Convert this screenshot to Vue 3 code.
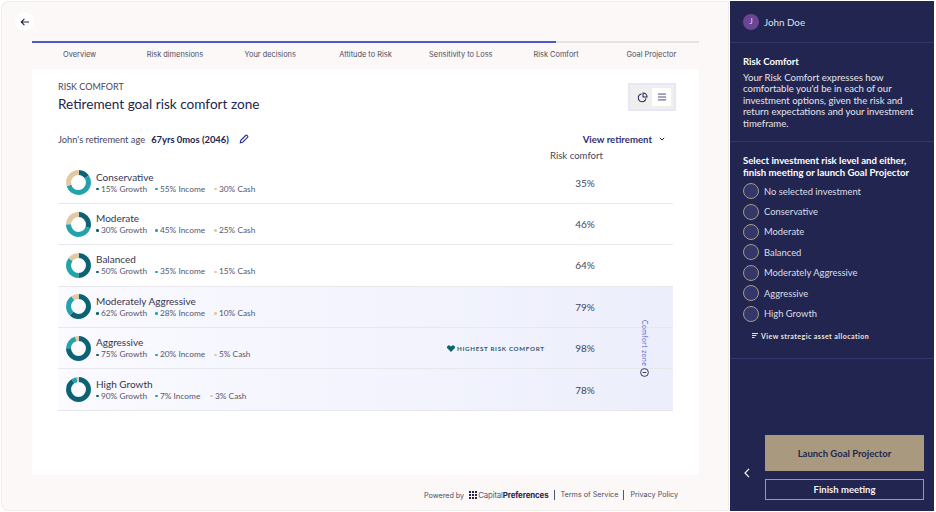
<script setup>
const steps = ['Overview', 'Risk dimensions', 'Your decisions', 'Attitude to Risk', 'Sensitivity to Loss', 'Risk Comfort', 'Goal Projector']

const plans = [
  { name: 'Conservative', growth: 15, income: 55, cash: 30, comfort: 35 },
  { name: 'Moderate', growth: 30, income: 45, cash: 25, comfort: 46 },
  { name: 'Balanced', growth: 50, income: 35, cash: 15, comfort: 64 },
  { name: 'Moderately Aggressive', growth: 62, income: 28, cash: 10, comfort: 79 },
  { name: 'Aggressive', growth: 75, income: 20, cash: 5, comfort: 98, best: true },
  { name: 'High Growth', growth: 90, income: 7, cash: 3, comfort: 78 },
]
const plainPlans = plans.slice(0, 3)
const zonePlans = plans.slice(3)

const options = ['No selected investment', ...plans.map((p) => p.name)]

function slices(p) {
  return [
    { color: '#0b6273', value: p.growth, offset: 25 },
    { color: '#22a3ac', value: p.income, offset: 25 - p.growth },
    { color: '#e3c9a2', value: p.cash, offset: 25 - p.growth - p.income },
  ]
}
</script>

<template>
  <div class="page">
    <main class="left">
      <button class="back">
        <svg width="10" height="10" viewBox="0 0 10 10" fill="none" stroke="#22254f" stroke-width="1.1">
          <path d="M9 5H1.2M4.4 1.8 1.2 5l3.2 3.2" />
        </svg>
      </button>

      <div class="progress"><div class="progress-fill"></div></div>
      <nav class="steps">
        <span v-for="s in steps" :key="s">{{ s }}</span>
      </nav>

      <section class="card">
        <div class="card-head">
          <div>
            <div class="eyebrow">RISK COMFORT</div>
            <h1>Retirement goal risk comfort zone</h1>
          </div>
          <div class="toggle">
            <span class="toggle-btn">
              <svg width="11" height="11" viewBox="0 0 12 12" fill="none" stroke="#22254f" stroke-width="1.1">
                <path d="M5 2.2a4.2 4.2 0 1 0 4.8 4.8" />
                <path d="M6.6 1v4.4H11A4.4 4.4 0 0 0 6.6 1Z" />
              </svg>
            </span>
            <span class="toggle-btn on">
              <svg width="10" height="8" viewBox="0 0 10 8" fill="#7f80a6">
                <rect x="1" y="0.4" width="8" height="1.4" />
                <rect x="1" y="3.3" width="8" height="1.4" />
                <rect x="1" y="6.2" width="8" height="1.4" />
              </svg>
            </span>
          </div>
        </div>

        <div class="age-row">
          <span class="age-label">John's retirement age</span>
          <b class="age-value">67yrs 0mos (2046)</b>
          <svg class="pencil" width="10" height="10" viewBox="0 0 10 10" fill="none" stroke="#2b2f8f" stroke-width="1.1">
            <path d="M1.3 8.7 1.8 6.3 6.6 1.5a1 1 0 0 1 1.5 0l.4.4a1 1 0 0 1 0 1.5L3.7 8.2Z" />
          </svg>
          <span class="view-link">View retirement</span>
          <svg class="chev" width="6" height="4" viewBox="0 0 6 4" fill="none" stroke="#22254f" stroke-width="1">
            <path d="M.8.8 3 3 5.2.8" />
          </svg>
        </div>
        <div class="col-head">Risk comfort</div>

        <div v-for="p in plainPlans" :key="p.name" class="row">
          <svg class="donut" width="25" height="25" viewBox="0 0 40 40">
            <circle
              v-for="s in slices(p)"
              :key="s.color"
              cx="20"
              cy="20"
              r="15.915"
              fill="none"
              stroke-width="8"
              :stroke="s.color"
              :stroke-dasharray="`${s.value} ${100 - s.value}`"
              :stroke-dashoffset="s.offset"
            />
          </svg>
          <div class="plan">
            <div class="plan-name">{{ p.name }}</div>
            <div class="mix">
              <span class="mix-item"><i class="dot growth"></i>{{ p.growth }}% Growth</span>
              <span class="mix-item"><i class="dot income"></i>{{ p.income }}% Income</span>
              <span class="mix-item"><i class="dot cash"></i>{{ p.cash }}% Cash</span>
            </div>
          </div>
          <div class="badge"></div>
          <div class="pct">{{ p.comfort }}%</div>
        </div>

        <div class="zone">
          <div v-for="p in zonePlans" :key="p.name" class="row">
            <svg class="donut" width="25" height="25" viewBox="0 0 40 40">
              <circle
                v-for="s in slices(p)"
                :key="s.color"
                cx="20"
                cy="20"
                r="15.915"
                fill="none"
                stroke-width="8"
                :stroke="s.color"
                :stroke-dasharray="`${s.value} ${100 - s.value}`"
                :stroke-dashoffset="s.offset"
              />
            </svg>
            <div class="plan">
              <div class="plan-name">{{ p.name }}</div>
              <div class="mix">
                <span class="mix-item"><i class="dot growth"></i>{{ p.growth }}% Growth</span>
                <span class="mix-item" :class="{ tight: p.income < 10 }"><i class="dot income"></i>{{ p.income }}% Income</span>
                <span class="mix-item"><i class="dot cash"></i>{{ p.cash }}% Cash</span>
              </div>
            </div>
            <div class="badge">
              <template v-if="p.best">
                <svg width="8" height="7" viewBox="0 0 8 7" fill="#0b6273">
                  <path d="M4 7 .6 3.6A1.9 1.9 0 0 1 .6.9a1.9 1.9 0 0 1 2.7 0l.7.6.7-.6a1.9 1.9 0 0 1 2.7 0 1.9 1.9 0 0 1 0 2.7Z" />
                </svg>
                HIGHEST RISK COMFORT
              </template>
            </div>
            <div class="pct">{{ p.comfort }}%</div>
          </div>
          <div class="zone-tag">
            <span class="zone-text">Comfort zone</span>
            <svg width="9" height="9" viewBox="0 0 9 9" fill="none" stroke="#22254f" stroke-width="0.9">
              <circle cx="4.5" cy="4.5" r="3.9" />
              <path d="M2.6 4.5h3.8" />
            </svg>
          </div>
        </div>
      </section>

      <footer class="foot">
        <span class="powered">Powered by</span>
        <svg class="logo" width="8" height="8" viewBox="0 0 8 8" fill="#22254f">
          <template v-for="x in [0, 3, 6]" :key="x">
            <rect v-for="y in [0, 3, 6]" :key="y" :x="x" :y="y" width="2" height="2" />
          </template>
        </svg>
        <span class="brand"><span class="brand-thin">Capital</span><b>Preferences</b></span>
        <span class="foot-link">Terms of Service</span>
        <span class="foot-link">Privacy Policy</span>
      </footer>
    </main>

    <aside class="side">
      <div class="user">
        <span class="avatar">J</span>
        <span>John Doe</span>
      </div>
      <div class="about">
        <h2>Risk Comfort</h2>
        <p>Your Risk Comfort expresses how comfortable you'd be in each of our investment options, given the risk and return expectations and your investment timeframe.</p>
      </div>
      <div class="select">
        <h2>Select investment risk level and either, finish meeting or launch Goal Projector</h2>
        <label v-for="o in options" :key="o" class="radio">
          <i class="radio-mark"></i>
          <span>{{ o }}</span>
        </label>
        <div class="strategic">
          <svg width="6" height="5" viewBox="0 0 6 5" fill="#e9e6df">
            <rect width="6" height="1" />
            <rect y="2" width="4.4" height="1" />
            <rect y="4" width="2.6" height="1" />
          </svg>
          View strategic asset allocation
        </div>
      </div>
      <div class="actions">
        <svg class="collapse" width="6" height="10" viewBox="0 0 6 10" fill="none" stroke="#fff" stroke-width="1.2">
          <path d="M5 .8 1 5l4 4.2" />
        </svg>
        <div class="buttons">
          <button class="launch">Launch Goal Projector</button>
          <button class="finish">Finish meeting</button>
        </div>
      </div>
    </aside>
  </div>
</template>

<style>
html, body { background: #fff; }
</style>

<style scoped>
.page {
  width: 936px;
  height: 512px;
  display: flex;
  overflow: hidden;
  padding: 1px 2px 1px 1px;
  box-sizing: border-box;
  background: #fff;
  font-family: Lato, "Noto Sans", sans-serif;
  color: #22254f;
}
.left {
  position: relative;
  width: 728px;
  background: #fbf8f7;
  border-radius: 8px 0 0 8px;
  box-shadow: inset 0 0 0 1px #f0eeed;
  padding: 40px 30px 0 31px;
  box-sizing: border-box;
  display: flex;
  flex-direction: column;
}
.back {
  position: absolute;
  left: 14px;
  top: 11px;
  width: 19px;
  height: 19px;
  border-radius: 50%;
  border: 0;
  padding: 0;
  background: #fff;
  display: flex;
  align-items: center;
  justify-content: center;
}
.progress {
  height: 2px;
  flex: none;
  background: #e4e2e2;
}
.progress-fill {
  width: 524px;
  height: 100%;
  background: #4a58d6;
}
.steps {
  display: grid;
  grid-template-columns: repeat(7, 1fr);
  height: 26px;
  flex: none;
  padding-bottom: 4px;
  box-sizing: border-box;
  align-items: center;
  text-align: center;
  font-family: Inter, sans-serif;
  font-size: 7.4px;
  color: #4b4d63;
}
.card {
  background: #fff;
  height: 406px;
  flex: none;
  padding: 12px 26px 0;
  box-sizing: border-box;
}
.card-head {
  display: flex;
  justify-content: space-between;
  align-items: flex-start;
  height: 44px;
}
.eyebrow {
  font-size: 9px;
  line-height: 12px;
  color: #44465f;
}
h1 {
  margin: 3px 0 0;
  font-size: 13.6px;
  line-height: 16px;
  font-weight: 400;
  color: #22254f;
}
.toggle {
  width: 48px;
  height: 28px;
  margin: 2px -3px 0 0;
  display: flex;
  box-sizing: border-box;
  border: 2px solid #e6e8fa;
  background: #f0efee;
  padding: 3px;
  justify-content: flex-end;
}
.toggle-btn {
  width: 19px;
  display: flex;
  align-items: center;
  justify-content: center;
}
.toggle-btn.on {
  background: #fff;
}
.age-row {
  display: flex;
  align-items: center;
  height: 14px;
  margin-top: 7px;
  font-size: 9.3px;
  color: #44465f;
}
.age-value {
  margin-left: 6px;
  font-size: 9.4px;
  font-weight: 700;
  color: #22254f;
}
.pencil {
  margin-left: 10px;
}
.view-link {
  margin-left: auto;
  font-size: 9.6px;
  font-weight: 700;
  color: #2f3270;
}
.chev {
  margin: 0 8px 0 7px;
}
.col-head {
  font-size: 9.6px;
  line-height: 12px;
  margin: 4px 70px 0 0;
  padding-bottom: 0.5px;
  text-align: right;
  color: #44465f;
}
.row {
  display: grid;
  grid-template-columns: 33px 348px 118px 40px;
  height: 41.4px;
  padding-left: 8px;
  align-items: center;
  border-bottom: 1px solid #e8e8ec;
  box-sizing: border-box;
  width: 615px;
}
.donut {
  display: block;
}
.plan {
  margin-left: -3px;
}
.plan-name {
  font-size: 10px;
  line-height: 12px;
  color: #33354f;
}
.mix {
  display: flex;
  margin-top: 1px;
  font-size: 8.3px;
  line-height: 11px;
  color: #55566d;
}
.mix-item {
  display: flex;
  align-items: center;
  width: 59px;
}
.mix-item.tight {
  width: 55px;
}
.mix-item .dot {
  width: 2.5px;
  height: 2.5px;
  border-radius: 50%;
  margin-right: 2.5px;
}
.growth { background: #0b6273; }
.income { background: #22a3ac; }
.cash { background: #e3c9a2; }
.badge {
  display: flex;
  align-items: center;
  gap: 2px;
  font-size: 6.2px;
  font-weight: 700;
  letter-spacing: 0.7px;
  color: #2f5a6c;
  white-space: nowrap;
}
.pct {
  font-size: 10px;
  text-align: center;
  color: #44465f;
}
.zone {
  position: relative;
  width: 615px;
  background: linear-gradient(90deg, #fafaff, #eceefb);
}
.zone-tag {
  position: absolute;
  left: 582px;
  top: 33px;
  width: 9px;
  display: flex;
  flex-direction: column;
  align-items: center;
  gap: 2px;
}
.zone-text {
  writing-mode: vertical-rl;
  font-size: 6.8px;
  line-height: 9px;
  letter-spacing: 0.45px;
  white-space: nowrap;
  color: #5a62d0;
}
.foot {
  display: flex;
  align-items: center;
  justify-content: flex-end;
  height: 36px;
  flex: none;
  padding: 4px 21px 0 0;
  box-sizing: border-box;
  font-family: Inter, sans-serif;
  font-size: 7.2px;
  color: #4b4d63;
}
.logo {
  margin-left: 5px;
}
.brand {
  margin-left: 1px;
  font-size: 7.9px;
  color: #22254f;
  letter-spacing: -0.1px;
}
.brand b {
  font-weight: 700;
}
.brand-thin {
  font-weight: 300;
}
.foot-link {
  margin-left: 5px;
  padding-left: 6px;
  border-left: 1px solid #55566d;
  line-height: 10px;
}
.side {
  width: 204px;
  margin-left: 1px;
  background: #22254f;
  color: #f1f1f4;
  display: flex;
  flex-direction: column;
  font-size: 9.6px;
}
.user {
  height: 41px;
  flex: none;
  display: flex;
  align-items: center;
  gap: 5px;
  padding-left: 13px;
  font-size: 9.8px;
  border-bottom: 1px solid #32366b;
  color: #dfe0e8;
}
.avatar {
  width: 16px;
  height: 16px;
  border-radius: 50%;
  background: #6a4593;
  font-size: 7.5px;
  display: flex;
  align-items: center;
  justify-content: center;
}
.about {
  height: 99px;
  flex: none;
  box-sizing: border-box;
  padding: 13px 20px 0 13px;
  border-bottom: 1px solid #32366b;
}
h2 {
  margin: 0;
  font-size: 9.6px;
  line-height: 11.5px;
  font-weight: 700;
  color: #fff;
}
.about p {
  margin: 4px 0 0;
  line-height: 11.5px;
  color: #e4e4ea;
}
.select {
  height: 217px;
  flex: none;
  box-sizing: border-box;
  padding: 13px 24px 0 13px;
  border-bottom: 1px solid #32366b;
}
.radio {
  display: flex;
  align-items: center;
  gap: 5px;
  height: 20.4px;
  font-size: 9.4px;
  color: #dcdde6;
}
.select h2 {
  margin-bottom: 3px;
}
.radio-mark {
  width: 14px;
  height: 14px;
  border: 1px solid #a89a80;
  border-radius: 50%;
  background: #33376a;
  flex: none;
}
.strategic {
  display: flex;
  align-items: center;
  gap: 3px;
  margin: 8px 0 0 9px;
  font-size: 7px;
  font-weight: 700;
  letter-spacing: 0.45px;
  white-space: nowrap;
  color: #e9e6df;
}
.actions {
  flex: 1;
  display: flex;
  align-items: flex-end;
  padding: 0 10px 11px 14px;
}
.collapse {
  margin-bottom: 22px;
}
.buttons {
  margin-left: 15px;
  width: 159px;
  display: flex;
  flex-direction: column;
  gap: 8px;
}
.buttons button {
  font-family: inherit;
  font-size: 9.5px;
  font-weight: 700;
  padding: 0;
}
.launch {
  height: 36px;
  border: 0;
  background: #a99a7f;
  color: #22254f;
}
.finish {
  height: 21px;
  border: 1px solid #a89a80;
  background: transparent;
  color: #f1f1f4;
}
</style>
